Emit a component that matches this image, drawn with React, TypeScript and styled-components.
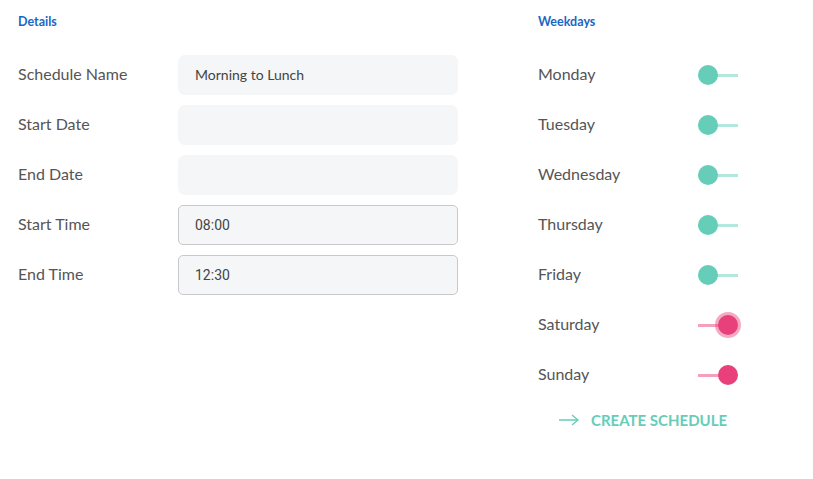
import styled, { createGlobalStyle } from "styled-components";

const GlobalStyle = createGlobalStyle`
  body {
    margin: 0;
    background: #fff;
    font-family: Lato, "Open Sans", sans-serif;
  }
`;

const days = [
  { name: "Monday", on: false },
  { name: "Tuesday", on: false },
  { name: "Wednesday", on: false },
  { name: "Thursday", on: false },
  { name: "Friday", on: false },
  { name: "Saturday", on: true, focus: true },
  { name: "Sunday", on: true },
];

const App = () => {
  return (
    <Page>
      <GlobalStyle />
      <Column>
        <Heading>Details</Heading>
        <Rows>
          <Row>
            <Label>Schedule Name</Label>
            <Field defaultValue="Morning to Lunch" />
          </Row>
          <Row>
            <Label>Start Date</Label>
            <Field />
          </Row>
          <Row>
            <Label>End Date</Label>
            <Field />
          </Row>
          <Row>
            <Label>Start Time</Label>
            <TimeField defaultValue="08:00" />
          </Row>
          <Row>
            <Label>End Time</Label>
            <TimeField defaultValue="12:30" />
          </Row>
        </Rows>
      </Column>
      <Column>
        <Heading>Weekdays</Heading>
        <Rows>
          {days.map((d) => (
            <Row key={d.name}>
              <Label>{d.name}</Label>
              <Toggle>
                <Track $on={d.on} />
                <Knob $on={d.on} $focus={!!d.focus} />
              </Toggle>
            </Row>
          ))}
        </Rows>
        <CreateBtn>
          <svg width="22" height="12" viewBox="0 0 22 12">
            <path
              d="M1 6 H20 M14 1 L20 6 L14 11"
              fill="none"
              stroke="#66cdb9"
              strokeWidth="1.3"
            />
          </svg>
          CREATE SCHEDULE
        </CreateBtn>
      </Column>
    </Page>
  );
};

export default App;

const Page = styled.div`
  display: flex;
  gap: 80px;
  padding: 14px 18px;
`;

const Column = styled.div`
  display: flex;
  flex-direction: column;
  width: 440px;
  &:last-child {
    width: 240px;
  }
`;

const Heading = styled.h3`
  margin: 0 0 25px;
  font-size: 12.5px;
  line-height: 16px;
  font-weight: 700;
  color: #1a66c4;
`;

const Rows = styled.div`
  display: flex;
  flex-direction: column;
  gap: 10px;
`;

const Row = styled.div`
  display: grid;
  grid-template-columns: 160px 1fr;
  align-items: center;
  height: 40px;
`;

const Label = styled.span`
  font-size: 16px;
  line-height: 20px;
  padding-bottom: 3px;
  color: #555;
`;

const Field = styled.input`
  box-sizing: border-box;
  width: 280px;
  height: 40px;
  border: none;
  border-radius: 7px;
  background: #f5f6f8;
  padding: 0 17px 2px;
  font-family: Lato, sans-serif;
  font-size: 14px;
  color: #444;
  outline: none;
`;

const TimeField = styled(Field)`
  border: 1px solid #c9c9cc;
  border-radius: 5px;
  padding: 0 16px 1px;
  font-family: Roboto, "Open Sans", sans-serif;
  font-size: 14px;
  color: #444;
`;

const Toggle = styled.div`
  position: relative;
  width: 42px;
  height: 26px;
  display: flex;
  align-items: center;
`;

const Track = styled.div<{ $on: boolean }>`
  width: ${(p) => (p.$on ? "32px" : "40px")};
  height: 3px;
  background: ${(p) => (p.$on ? "#f4a0bd" : "#b3e7dd")};
`;

const Knob = styled.div<{ $on: boolean; $focus: boolean }>`
  position: absolute;
  top: 3px;
  left: ${(p) => (p.$on ? "20px" : "0")};
  width: 20px;
  height: 20px;
  border-radius: 50%;
  background: ${(p) => (p.$on ? "#e8407a" : "#66cdb9")};
  box-shadow: ${(p) => (p.$focus ? "0 0 0 3px rgba(232, 64, 122, 0.45)" : "none")};
`;

const CreateBtn = styled.button`
  display: flex;
  align-items: center;
  gap: 11px;
  margin: 12px 0 0 20px;
  padding: 0;
  height: 26px;
  border: none;
  background: none;
  font-family: Lato, sans-serif;
  font-size: 15px;
  font-weight: 700;
  color: #66cdb9;
  cursor: pointer;
`;
